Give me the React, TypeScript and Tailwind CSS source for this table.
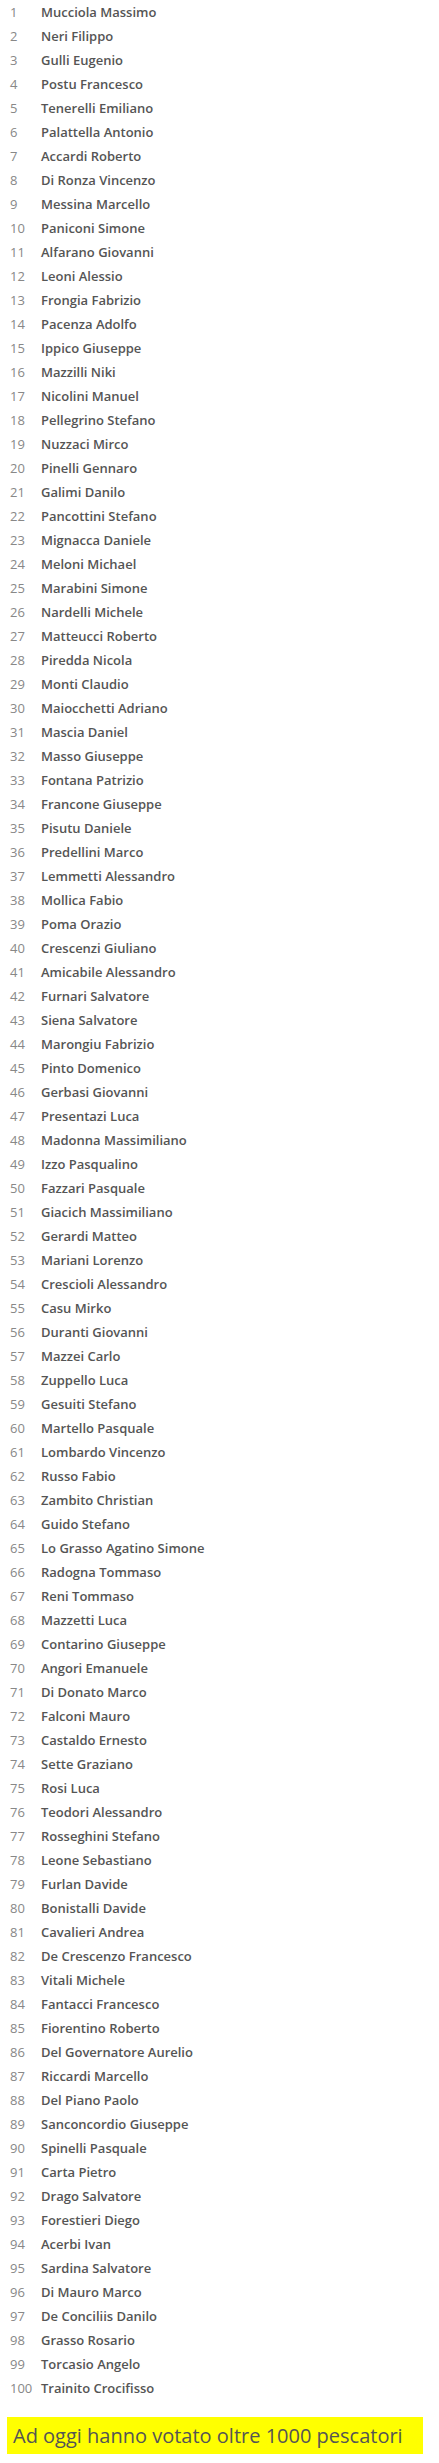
import React from 'react';

const names = [
  'Mucciola Massimo', 'Neri Filippo', 'Gulli Eugenio', 'Postu Francesco', 'Tenerelli Emiliano',
  'Palattella Antonio', 'Accardi Roberto', 'Di Ronza Vincenzo', 'Messina Marcello', 'Paniconi Simone',
  'Alfarano Giovanni', 'Leoni Alessio', 'Frongia Fabrizio', 'Pacenza Adolfo', 'Ippico Giuseppe',
  'Mazzilli Niki', 'Nicolini Manuel', 'Pellegrino Stefano', 'Nuzzaci Mirco', 'Pinelli Gennaro',
  'Galimi Danilo', 'Pancottini Stefano', 'Mignacca Daniele', 'Meloni Michael', 'Marabini Simone',
  'Nardelli Michele', 'Matteucci Roberto', 'Piredda Nicola', 'Monti Claudio', 'Maiocchetti Adriano',
  'Mascia Daniel', 'Masso Giuseppe', 'Fontana Patrizio', 'Francone Giuseppe', 'Pisutu Daniele',
  'Predellini Marco', 'Lemmetti Alessandro', 'Mollica Fabio', 'Poma Orazio', 'Crescenzi Giuliano',
  'Amicabile Alessandro', 'Furnari Salvatore', 'Siena Salvatore', 'Marongiu Fabrizio', 'Pinto Domenico',
  'Gerbasi Giovanni', 'Presentazi Luca', 'Madonna Massimiliano', 'Izzo Pasqualino', 'Fazzari Pasquale',
  'Giacich Massimiliano', 'Gerardi Matteo', 'Mariani Lorenzo', 'Crescioli Alessandro', 'Casu Mirko',
  'Duranti Giovanni', 'Mazzei Carlo', 'Zuppello Luca', 'Gesuiti Stefano', 'Martello Pasquale',
  'Lombardo Vincenzo', 'Russo Fabio', 'Zambito Christian', 'Guido Stefano', 'Lo Grasso Agatino Simone',
  'Radogna Tommaso', 'Reni Tommaso', 'Mazzetti Luca', 'Contarino Giuseppe', 'Angori Emanuele',
  'Di Donato Marco', 'Falconi Mauro', 'Castaldo Ernesto', 'Sette Graziano', 'Rosi Luca',
  'Teodori Alessandro', 'Rosseghini Stefano', 'Leone Sebastiano', 'Furlan Davide', 'Bonistalli Davide',
  'Cavalieri Andrea', 'De Crescenzo Francesco', 'Vitali Michele', 'Fantacci Francesco', 'Fiorentino Roberto',
  'Del Governatore Aurelio', 'Riccardi Marcello', 'Del Piano Paolo', 'Sanconcordio Giuseppe', 'Spinelli Pasquale',
  'Carta Pietro', 'Drago Salvatore', 'Forestieri Diego', 'Acerbi Ivan', 'Sardina Salvatore',
  'Di Mauro Marco', 'De Conciliis Danilo', 'Grasso Rosario', 'Torcasio Angelo', 'Trainito Crocifisso',
];

export default function App() {
  return (
    <div className="bg-white min-h-[2463px] font-['Open_Sans',sans-serif] text-[#555]">
      <ol className="pt-[1px] pl-[10px]">
        {names.map((name, i) => (
          <li key={name} className="flex items-center h-6 text-[13px]">
            <span className="w-[31px] shrink-0 text-[#888]">{i + 1}</span>
            <span className="font-semibold">{name}</span>
          </li>
        ))}
      </ol>
      <div className="mt-4 ml-[7px] w-[416px] h-[37px] bg-[#ffff00] flex items-center pl-[6px]">
        <p className="text-[20px] text-[#555]">Ad oggi hanno votato oltre 1000 pescatori</p>
      </div>
    </div>
  );
}
